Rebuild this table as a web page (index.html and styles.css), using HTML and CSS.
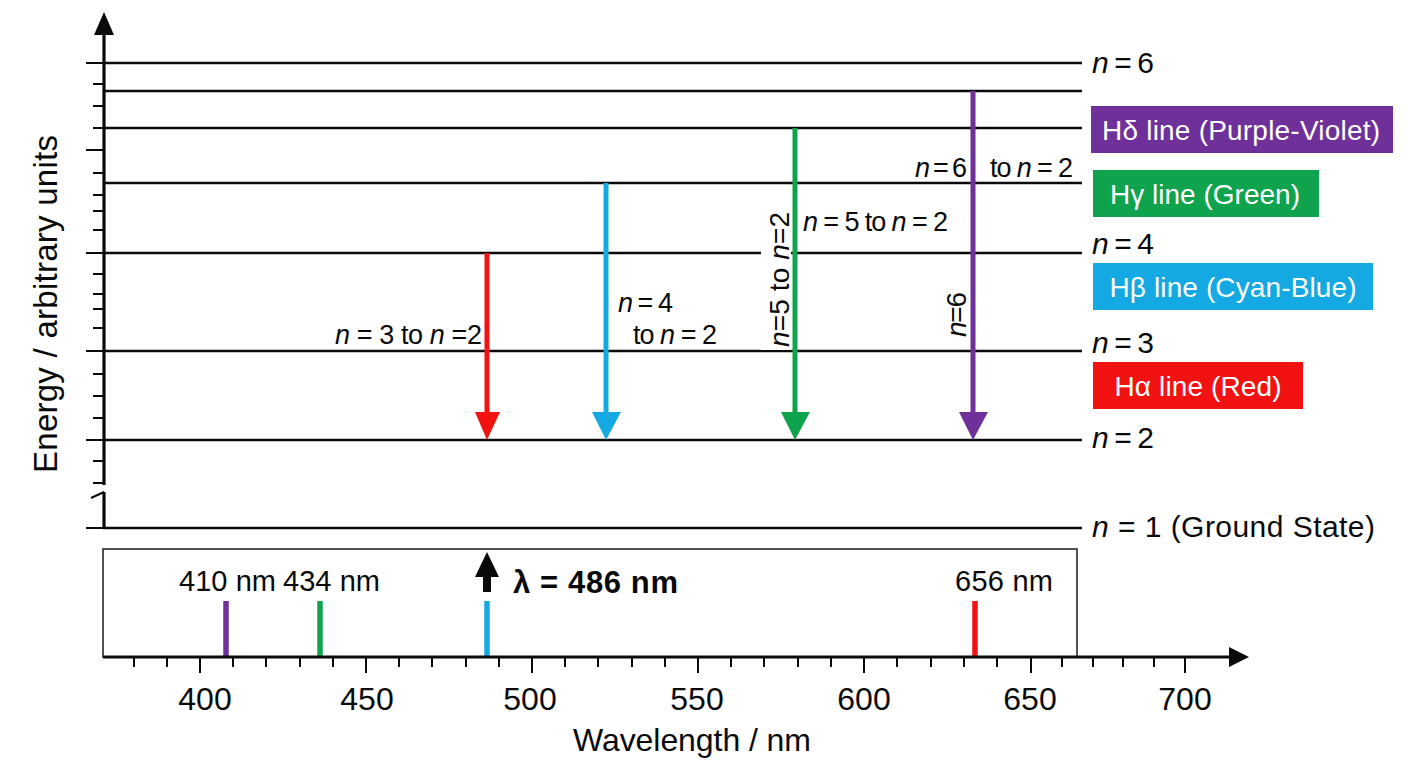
FILE: index.html
```html
<!DOCTYPE html>
<html lang="en">
<head>
<meta charset="utf-8">
<title>Hydrogen Balmer series energy level diagram</title>
<link rel="stylesheet" href="styles.css">
</head>
<body>
<main class="figure">
<svg class="chart" width="1408" height="768" viewBox="0 0 1408 768" xmlns="http://www.w3.org/2000/svg">
  <!-- Energy levels -->
  <g class="level">
    <line x1="103" y1="63" x2="1082" y2="63"/>
    <line x1="103" y1="91" x2="1082" y2="91"/>
    <line x1="103" y1="128" x2="1082" y2="128"/>
    <line x1="103" y1="183" x2="1082" y2="183"/>
    <line x1="103" y1="253" x2="1082" y2="253"/>
    <line x1="103" y1="351" x2="1082" y2="351"/>
    <line x1="103" y1="440" x2="1082" y2="440"/>
    <line x1="103" y1="528" x2="1082" y2="528"/>
  </g>

  <!-- Y axis -->
  <g class="axis">
    <line x1="104" y1="30" x2="104" y2="485"/>
    <line x1="104" y1="492" x2="104" y2="529"/>
    <line class="thin" x1="91" y1="498" x2="104" y2="492"/>
  </g>
  <polygon class="black" points="104,12 94,35 114,35"/>
  <g class="tick">
    <line x1="86" y1="63" x2="104" y2="63"/>
    <line x1="93" y1="84" x2="104" y2="84"/>
    <line x1="93" y1="106" x2="104" y2="106"/>
    <line x1="93" y1="128" x2="104" y2="128"/>
    <line x1="86" y1="150" x2="104" y2="150"/>
    <line x1="93" y1="173" x2="104" y2="173"/>
    <line x1="93" y1="195" x2="104" y2="195"/>
    <line x1="93" y1="211" x2="104" y2="211"/>
    <line x1="93" y1="230" x2="104" y2="230"/>
    <line x1="86" y1="253" x2="104" y2="253"/>
    <line x1="93" y1="274" x2="104" y2="274"/>
    <line x1="93" y1="294" x2="104" y2="294"/>
    <line x1="93" y1="309" x2="104" y2="309"/>
    <line x1="93" y1="328" x2="104" y2="328"/>
    <line x1="86" y1="351" x2="104" y2="351"/>
    <line x1="93" y1="374" x2="104" y2="374"/>
    <line x1="93" y1="396" x2="104" y2="396"/>
    <line x1="93" y1="418" x2="104" y2="418"/>
    <line x1="86" y1="440" x2="104" y2="440"/>
    <line x1="93" y1="461" x2="104" y2="461"/>
    <line x1="93" y1="483" x2="104" y2="483"/>
    <line x1="86" y1="528" x2="104" y2="528"/>
  </g>
  <text class="axis-title ytitle" transform="translate(57,304) rotate(-90)" text-anchor="middle" textLength="338">Energy / arbitrary units</text>

  <!-- Transition arrows -->
  <line class="arr red-s" x1="487" y1="253" x2="487" y2="414"/>
  <polygon class="red-f" points="475,412 500,412 487,440"/>
  <line class="arr blue-s" x1="606" y1="183" x2="606" y2="414"/>
  <polygon class="blue-f" points="592,412 621,412 606,440"/>
  <line class="arr green-s" x1="795" y1="128" x2="795" y2="414"/>
  <polygon class="green-f" points="781,412 810,412 795,440"/>
  <line class="arr purple-s" x1="973" y1="91" x2="973" y2="414"/>
  <polygon class="purple-f" points="959,412 988,412 973,440"/>

  <!-- Transition labels -->
  <text class="lbl" x="335" y="344" textLength="147"><tspan class="it">n</tspan> = 3 to <tspan class="it">n</tspan> =2</text>
  <text class="lbl" x="618" y="312" textLength="55"><tspan class="it">n</tspan> = 4</text>
  <text class="lbl" x="633" y="344" textLength="84">to <tspan class="it">n</tspan> = 2</text>
  <rect class="mask" x="761" y="208" width="30" height="142"/>
  <text class="lbl rot" transform="translate(789,347) rotate(-90)" textLength="135"><tspan class="it">n</tspan>=5 to <tspan class="it">n</tspan>=2</text>
  <text class="lbl" x="803" y="231" textLength="145"><tspan class="it">n</tspan> = 5 to <tspan class="it">n</tspan> = 2</text>
  <text class="lbl" x="915" y="177" textLength="52"><tspan class="it">n</tspan> = 6</text>
  <text class="lbl" x="990" y="177" textLength="83">to <tspan class="it">n</tspan> = 2</text>
  <text class="lbl rot" transform="translate(966,337) rotate(-90)" textLength="45"><tspan class="it">n</tspan>=6</text>

  <!-- Level labels -->
  <text class="lvl" x="1092" y="73" textLength="62"><tspan class="it">n</tspan> = 6</text>
  <text class="lvl" x="1092" y="254" textLength="62"><tspan class="it">n</tspan> = 4</text>
  <text class="lvl" x="1092" y="353" textLength="62"><tspan class="it">n</tspan> = 3</text>
  <text class="lvl" x="1092" y="448" textLength="62"><tspan class="it">n</tspan> = 2</text>
  <text class="lvl" x="1092" y="537" textLength="283"><tspan class="it">n</tspan> = 1 (Ground State)</text>

  <!-- Legend badges -->
  <rect class="purple-f" x="1091" y="106" width="302" height="47"/>
  <text class="badge" x="1241" y="140" text-anchor="middle" textLength="278">Hδ line (Purple-Violet)</text>
  <rect class="green-f" x="1093" y="170" width="226" height="47"/>
  <text class="badge" x="1205" y="204" text-anchor="middle" textLength="190">Hγ line (Green)</text>
  <rect class="blue-f" x="1093" y="263" width="280" height="47"/>
  <text class="badge" x="1233" y="297" text-anchor="middle" textLength="247">Hβ line (Cyan-Blue)</text>
  <rect class="red-f" x="1093" y="362" width="210" height="47"/>
  <text class="badge" x="1198" y="396" text-anchor="middle" textLength="167">Hα line (Red)</text>

  <!-- Spectrum box -->
  <rect class="box" x="103" y="549" width="974" height="108"/>
  <line class="spec purple-s" x1="226" y1="601" x2="226" y2="657"/>
  <line class="spec green-s" x1="320" y1="601" x2="320" y2="657"/>
  <line class="spec blue-s" x1="487" y1="601" x2="487" y2="657"/>
  <line class="spec red-s" x1="975" y1="601" x2="975" y2="657"/>
  <polygon class="black" points="487,552 475,577 499,577"/>
  <rect class="black" x="483" y="575" width="8" height="17"/>
  <text class="lbl nm" x="179" y="591" textLength="97">410 nm</text>
  <text class="lbl nm" x="283" y="591" textLength="97">434 nm</text>
  <text class="lbl nm" x="955" y="591" textLength="98">656 nm</text>
  <text class="lbl strong" x="513" y="593" textLength="165">λ = 486 nm</text>

  <!-- X axis -->
  <line class="axis" x1="103" y1="657" x2="1234" y2="657"/>
  <polygon class="black" points="1249,657 1229,647 1229,667"/>
  <g class="tick">
    <line x1="134" y1="657" x2="134" y2="667"/>
    <line x1="167" y1="657" x2="167" y2="667"/>
    <line x1="200" y1="657" x2="200" y2="673"/>
    <line x1="233" y1="657" x2="233" y2="667"/>
    <line x1="266" y1="657" x2="266" y2="667"/>
    <line x1="300" y1="657" x2="300" y2="667"/>
    <line x1="333" y1="657" x2="333" y2="667"/>
    <line x1="366" y1="657" x2="366" y2="673"/>
    <line x1="399" y1="657" x2="399" y2="667"/>
    <line x1="432" y1="657" x2="432" y2="667"/>
    <line x1="466" y1="657" x2="466" y2="667"/>
    <line x1="499" y1="657" x2="499" y2="667"/>
    <line x1="532" y1="657" x2="532" y2="673"/>
    <line x1="565" y1="657" x2="565" y2="667"/>
    <line x1="598" y1="657" x2="598" y2="667"/>
    <line x1="632" y1="657" x2="632" y2="667"/>
    <line x1="665" y1="657" x2="665" y2="667"/>
    <line x1="698" y1="657" x2="698" y2="673"/>
    <line x1="731" y1="657" x2="731" y2="667"/>
    <line x1="764" y1="657" x2="764" y2="667"/>
    <line x1="798" y1="657" x2="798" y2="667"/>
    <line x1="831" y1="657" x2="831" y2="667"/>
    <line x1="864" y1="657" x2="864" y2="673"/>
    <line x1="897" y1="657" x2="897" y2="667"/>
    <line x1="931" y1="657" x2="931" y2="667"/>
    <line x1="964" y1="657" x2="964" y2="667"/>
    <line x1="997" y1="657" x2="997" y2="667"/>
    <line x1="1031" y1="657" x2="1031" y2="673"/>
    <line x1="1062" y1="657" x2="1062" y2="667"/>
    <line x1="1093" y1="657" x2="1093" y2="667"/>
    <line x1="1123" y1="657" x2="1123" y2="667"/>
    <line x1="1154" y1="657" x2="1154" y2="667"/>
    <line x1="1185" y1="657" x2="1185" y2="673"/>
  </g>
  <g class="num">
    <text x="205" y="710">400</text>
    <text x="367" y="710">450</text>
    <text x="530" y="710">500</text>
    <text x="697" y="710">550</text>
    <text x="864" y="710">600</text>
    <text x="1030" y="710">650</text>
    <text x="1185" y="710">700</text>
  </g>
  <text class="axis-title" x="692" y="751" text-anchor="middle" textLength="238">Wavelength / nm</text>
</svg>
</main>
</body>
</html>
```

FILE: styles.css
```css
html, body {
  margin: 0;
  padding: 0;
  background: #ffffff;
}

.figure {
  display: block;
  width: 1408px;
  height: 768px;
  overflow: hidden;
}

.chart {
  display: block;
}

.level line {
  stroke: #0a0a0a;
  stroke-width: 2.6;
}

.axis,
.axis line {
  stroke: #0a0a0a;
  stroke-width: 3.2;
}

.axis .thin {
  stroke-width: 2;
}

.tick line {
  stroke: #0a0a0a;
  stroke-width: 2;
}

.black {
  fill: #0a0a0a;
}

.arr {
  stroke-width: 5;
}

.spec {
  stroke-width: 5.5;
}

.red-s { stroke: #f21212; }
.red-f { fill: #f21212; }
.blue-s { stroke: #14a9e2; }
.blue-f { fill: #14a9e2; }
.green-s { stroke: #10a34d; }
.green-f { fill: #10a34d; }
.purple-s { stroke: #6f3099; }
.purple-f { fill: #6f3099; }

.mask {
  fill: #ffffff;
}

.box {
  fill: none;
  stroke: #1a1a1a;
  stroke-width: 1.5;
}

.lbl,
.lvl,
.badge,
.num,
.axis-title {
  font-family: "Liberation Sans", Arial, Helvetica, sans-serif;
  fill: #0a0a0a;
}

.lbl {
  font-size: 27px;
}

.rot {
  font-size: 28px;
}

.nm {
  font-size: 29px;
}

.lvl {
  font-size: 30px;
}

.it {
  font-style: italic;
}

.strong {
  font-weight: 700;
  font-size: 31px;
}

.badge {
  font-size: 28px;
  fill: #ffffff;
}

.num {
  font-size: 32px;
  text-anchor: middle;
}

.axis-title {
  font-size: 32px;
}

.ytitle {
  font-size: 33px;
}
```
